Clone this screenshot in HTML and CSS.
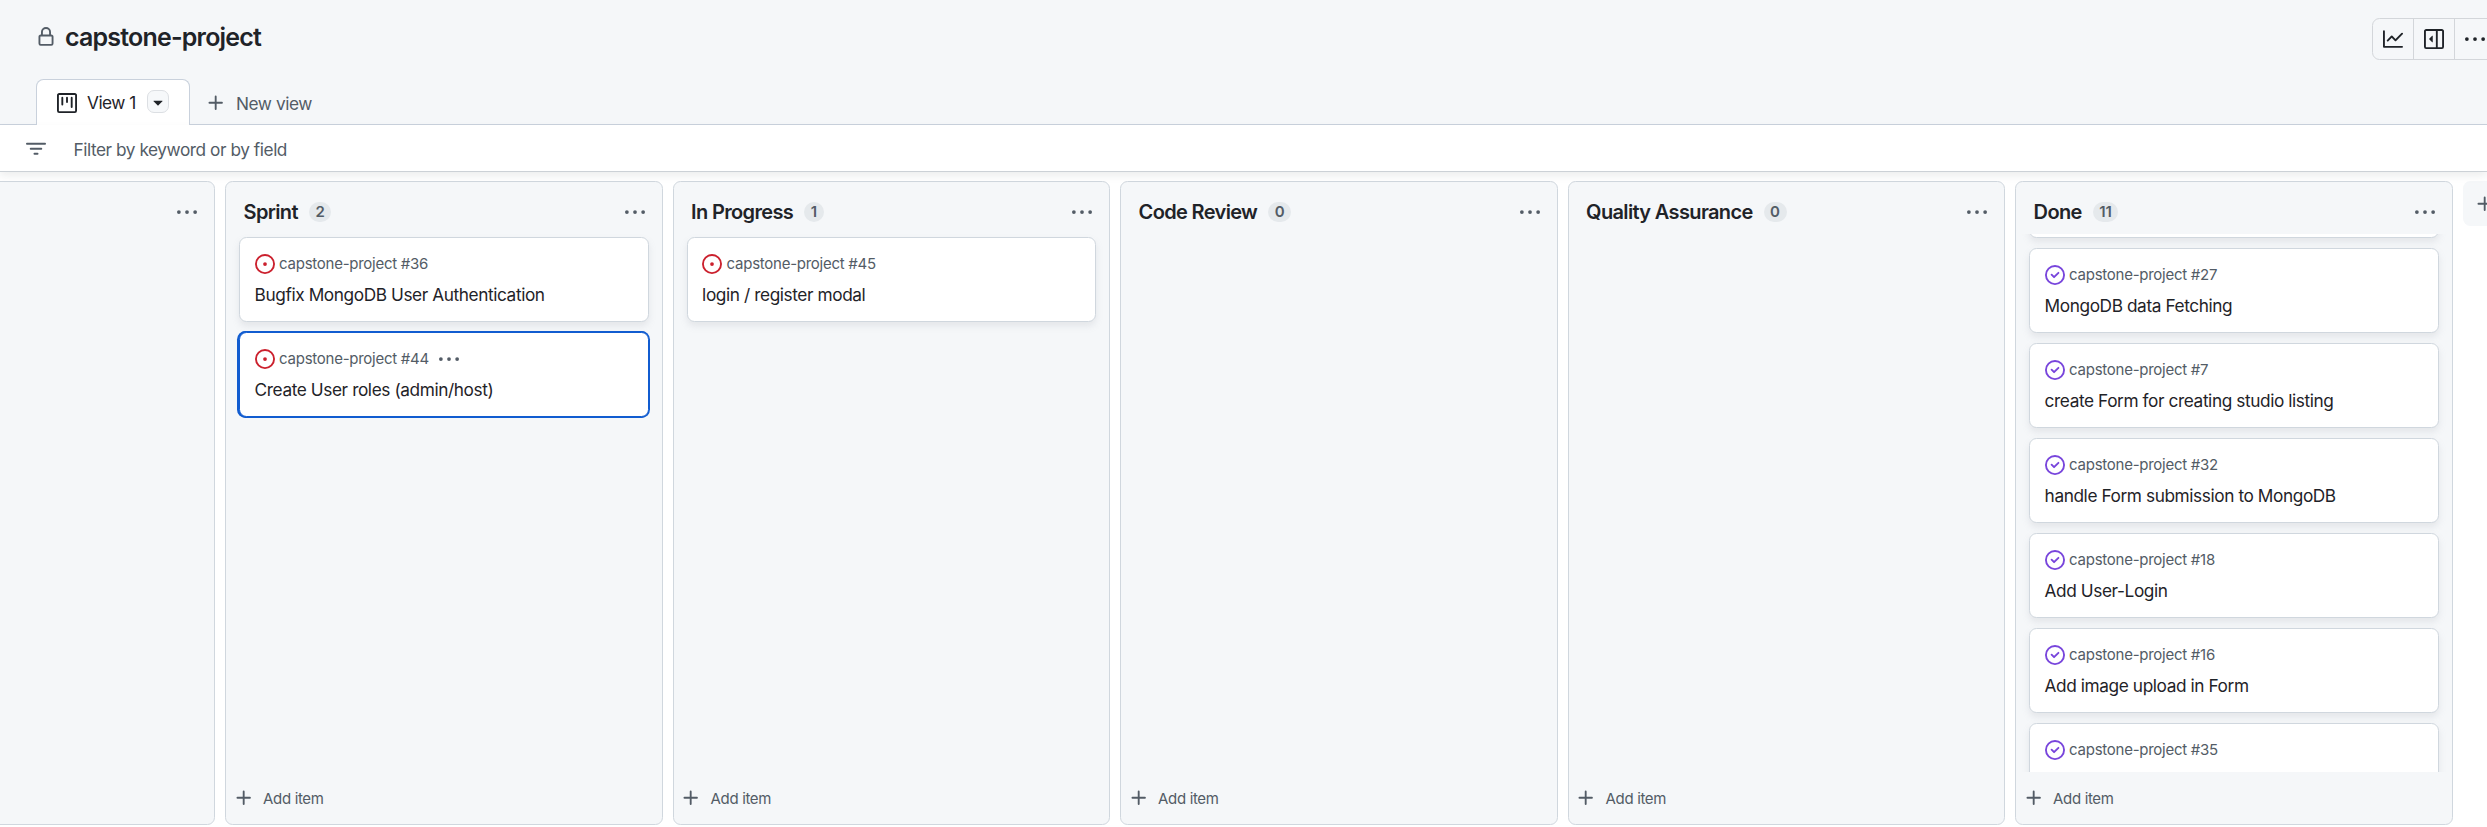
FILE: index.html
```
<!DOCTYPE html>
<html lang="en">
<head>
<meta charset="utf-8">
<title>capstone-project</title>
<link rel="stylesheet" href="styles.css">
</head>
<body>
<svg class="sprite" aria-hidden="true">
  <symbol id="lock" viewBox="0 0 16 16"><path d="M4 4a4 4 0 0 1 8 0v2h.25c.966 0 1.75.784 1.75 1.75v5.5A1.75 1.75 0 0 1 12.25 15h-8.5A1.75 1.75 0 0 1 2 13.25v-5.5C2 6.784 2.784 6 3.75 6H4Zm8.25 3.5h-8.5a.25.25 0 0 0-.25.25v5.5c0 .138.112.25.25.25h8.5a.25.25 0 0 0 .25-.25v-5.5a.25.25 0 0 0-.25-.25ZM10.5 6V4a2.5 2.5 0 1 0-5 0v2Z"/></symbol>
  <symbol id="project" viewBox="0 0 16 16"><path d="M1.75 0h12.5C15.216 0 16 .784 16 1.75v12.5A1.75 1.75 0 0 1 14.25 16H1.75A1.75 1.75 0 0 1 0 14.25V1.75C0 .784.784 0 1.75 0ZM1.5 1.75v12.5c0 .138.112.25.25.25h12.5a.25.25 0 0 0 .25-.25V1.75a.25.25 0 0 0-.25-.25H1.75a.25.25 0 0 0-.25.25ZM11.75 3a.75.75 0 0 1 .75.75v7.5a.75.75 0 0 1-1.5 0v-7.5a.75.75 0 0 1 .75-.75Zm-8.25.75a.75.75 0 0 1 1.5 0v5.5a.75.75 0 0 1-1.5 0ZM8 3a.75.75 0 0 1 .75.75v3.5a.75.75 0 0 1-1.5 0v-3.5A.75.75 0 0 1 8 3Z"/></symbol>
  <symbol id="plus" viewBox="0 0 16 16"><path d="M7.75 2a.75.75 0 0 1 .75.75V7h4.25a.75.75 0 0 1 0 1.5H8.5v4.25a.75.75 0 0 1-1.5 0V8.5H2.75a.75.75 0 0 1 0-1.5H7V2.75A.75.75 0 0 1 7.75 2Z"/></symbol>
  <symbol id="filter" viewBox="0 0 16 16"><path d="M.75 3h14.5a.75.75 0 0 1 0 1.5H.75a.75.75 0 0 1 0-1.5ZM3 7.75A.75.75 0 0 1 3.75 7h8.5a.75.75 0 0 1 0 1.5h-8.5A.75.75 0 0 1 3 7.75Zm3 4a.75.75 0 0 1 .75-.75h2.5a.75.75 0 0 1 0 1.5h-2.5a.75.75 0 0 1-.75-.75Z"/></symbol>
  <symbol id="triangle" viewBox="0 0 16 16"><path d="m4.427 7.427 3.396 3.396a.25.25 0 0 0 .354 0l3.396-3.396A.25.25 0 0 0 11.396 7H4.604a.25.25 0 0 0-.177.427Z"/></symbol>
  <symbol id="graph" viewBox="0 0 16 16"><path d="M1.5 1.75V13.5h13.75a.75.75 0 0 1 0 1.5H.75a.75.75 0 0 1-.75-.75V1.75a.75.75 0 0 1 1.5 0Zm14.28 2.53-5.25 5.25a.75.75 0 0 1-1.06 0L7 7.06 4.28 9.78a.751.751 0 0 1-1.042-.018.751.751 0 0 1-.018-1.042l3.25-3.25a.75.75 0 0 1 1.06 0L10 7.94l4.72-4.72a.751.751 0 0 1 1.042.018.751.751 0 0 1 .018 1.042Z"/></symbol>
  <symbol id="sidebar" viewBox="0 0 16 16"><path d="m4.177 7.823 2.396-2.396A.25.25 0 0 1 7 5.604v4.792a.25.25 0 0 1-.427.177L4.177 8.177a.25.25 0 0 1 0-.354Z"/><path d="M0 1.75C0 .784.784 0 1.75 0h12.5C15.216 0 16 .784 16 1.75v12.5A1.75 1.75 0 0 1 14.25 16H1.75A1.75 1.75 0 0 1 0 14.25Zm1.75-.25a.25.25 0 0 0-.25.25v12.5c0 .138.112.25.25.25H9.5v-13Zm12.5 13a.25.25 0 0 0 .25-.25V1.75a.25.25 0 0 0-.25-.25H11v13Z"/></symbol>
  <symbol id="dots" viewBox="0 0 16 16"><circle cx="1.5" cy="8" r="1.5"/><circle cx="8" cy="8" r="1.5"/><circle cx="14.5" cy="8" r="1.5"/></symbol>
  <symbol id="open" viewBox="0 0 16 16"><path d="M8 9.5a1.5 1.5 0 1 0 0-3 1.5 1.5 0 0 0 0 3Z"/><path d="M8 0a8 8 0 1 1 0 16A8 8 0 0 1 8 0ZM1.5 8a6.5 6.5 0 1 0 13 0 6.5 6.5 0 0 0-13 0Z"/></symbol>
  <symbol id="closed" viewBox="0 0 16 16"><path d="M11.28 6.78a.75.75 0 0 0-1.06-1.06L7.25 8.69 5.78 7.22a.75.75 0 0 0-1.06 1.06l2 2a.75.75 0 0 0 1.06 0l3.5-3.5Z"/><path d="M16 8A8 8 0 1 1 0 8a8 8 0 0 1 16 0Zm-1.5 0a6.5 6.5 0 1 0-13 0 6.5 6.5 0 0 0 13 0Z"/></symbol>
</svg>

<header class="header">
  <svg class="icon muted"><use href="#lock"/></svg>
  <h1 class="title">capstone-project</h1>
  <div class="button-group">
    <button class="group-button"><svg class="icon"><use href="#graph"/></svg></button>
    <button class="group-button"><svg class="icon"><use href="#sidebar"/></svg></button>
    <button class="group-button"><svg class="icon"><use href="#dots"/></svg></button>
  </div>
</header>

<nav class="tabs">
  <div class="tab">
    <svg class="icon"><use href="#project"/></svg>
    <span class="tab-label">View 1</span>
    <button class="tab-menu"><svg class="icon"><use href="#triangle"/></svg></button>
  </div>
  <div class="new-view">
    <svg class="icon"><use href="#plus"/></svg>
    <span class="new-view-label">New view</span>
  </div>
</nav>

<div class="filter-bar">
  <svg class="icon"><use href="#filter"/></svg>
  <span class="filter-text">Filter by keyword or by field</span>
</div>

<main class="board">
  <section class="column">
    <div class="column-header"><svg class="icon column-menu"><use href="#dots"/></svg></div>
    <div class="cards"></div>
    <div class="add-item"><svg class="icon"><use href="#plus"/></svg></div>
  </section>

  <section class="column">
    <div class="column-header"><h2 class="column-name">Sprint</h2><span class="count">2</span><svg class="icon column-menu"><use href="#dots"/></svg></div>
    <div class="cards">
      <article class="card">
        <div class="card-ref"><svg class="icon open"><use href="#open"/></svg><span class="ref-text">capstone-project #36</span></div>
        <div class="card-title">Bugfix MongoDB User Authentication</div>
      </article>
      <article class="card selected">
        <div class="card-ref"><svg class="icon open"><use href="#open"/></svg><span class="ref-text">capstone-project #44</span><svg class="icon card-menu"><use href="#dots"/></svg></div>
        <div class="card-title">Create User roles (admin/host)</div>
      </article>
    </div>
    <div class="add-item"><svg class="icon"><use href="#plus"/></svg><span class="add-label">Add item</span></div>
  </section>

  <section class="column">
    <div class="column-header"><h2 class="column-name">In Progress</h2><span class="count">1</span><svg class="icon column-menu"><use href="#dots"/></svg></div>
    <div class="cards">
      <article class="card">
        <div class="card-ref"><svg class="icon open"><use href="#open"/></svg><span class="ref-text">capstone-project #45</span></div>
        <div class="card-title">login / register modal</div>
      </article>
    </div>
    <div class="add-item"><svg class="icon"><use href="#plus"/></svg><span class="add-label">Add item</span></div>
  </section>

  <section class="column">
    <div class="column-header"><h2 class="column-name">Code Review</h2><span class="count">0</span><svg class="icon column-menu"><use href="#dots"/></svg></div>
    <div class="cards"></div>
    <div class="add-item"><svg class="icon"><use href="#plus"/></svg><span class="add-label">Add item</span></div>
  </section>

  <section class="column">
    <div class="column-header"><h2 class="column-name">Quality Assurance</h2><span class="count">0</span><svg class="icon column-menu"><use href="#dots"/></svg></div>
    <div class="cards"></div>
    <div class="add-item"><svg class="icon"><use href="#plus"/></svg><span class="add-label">Add item</span></div>
  </section>

  <section class="column">
    <div class="column-header"><h2 class="column-name">Done</h2><span class="count">11</span><svg class="icon column-menu"><use href="#dots"/></svg></div>
    <div class="cards scrolled">
      <article class="card"></article>
      <article class="card">
        <div class="card-ref"><svg class="icon closed"><use href="#closed"/></svg><span class="ref-text">capstone-project #27</span></div>
        <div class="card-title">MongoDB data Fetching</div>
      </article>
      <article class="card">
        <div class="card-ref"><svg class="icon closed"><use href="#closed"/></svg><span class="ref-text">capstone-project #7</span></div>
        <div class="card-title">create Form for creating studio listing</div>
      </article>
      <article class="card">
        <div class="card-ref"><svg class="icon closed"><use href="#closed"/></svg><span class="ref-text">capstone-project #32</span></div>
        <div class="card-title">handle Form submission to MongoDB</div>
      </article>
      <article class="card">
        <div class="card-ref"><svg class="icon closed"><use href="#closed"/></svg><span class="ref-text">capstone-project #18</span></div>
        <div class="card-title">Add User-Login</div>
      </article>
      <article class="card">
        <div class="card-ref"><svg class="icon closed"><use href="#closed"/></svg><span class="ref-text">capstone-project #16</span></div>
        <div class="card-title">Add image upload in Form</div>
      </article>
      <article class="card">
        <div class="card-ref"><svg class="icon closed"><use href="#closed"/></svg><span class="ref-text">capstone-project #35</span></div>
      </article>
    </div>
    <div class="add-item"><svg class="icon"><use href="#plus"/></svg><span class="add-label">Add item</span></div>
  </section>

  <button class="add-column"><svg class="icon"><use href="#plus"/></svg></button>
</main>
</body>
</html>
```
FILE: styles.css
```
* { box-sizing: border-box; }

html, body { height: 100%; }

body {
  margin: 0;
  overflow: hidden;
  display: flex;
  flex-direction: column;
  background: #fff;
  color: #1f2328;
  font-family: Inter, "Liberation Sans", sans-serif;
  font-size: 17.25px;
}

h1, h2 { margin: 0; }
button { margin: 0; padding: 0; color: inherit; font: inherit; }

.sprite { display: none; }
.icon { display: block; flex: none; width: 20px; height: 20px; fill: currentColor; }
.muted { color: #535c66; }
.open { color: #cb202d; }
.closed { color: #7845dc; }

.header {
  flex: none;
  display: flex;
  align-items: center;
  height: 79px;
  padding: 0 0 6px 36px;
  background: #f5f7f9;
}
.title {
  margin-left: 9px;
  font-size: 25px;
  font-weight: 600;
  line-height: 38px;
  letter-spacing: -0.8px;
}
.button-group {
  flex: none;
  display: flex;
  width: 124px;
  height: 42px;
  margin: 4px -9px 0 auto;
  border: 1px solid #d3d6da;
  border-radius: 7.5px;
}
.group-button {
  flex: 1;
  display: flex;
  align-items: center;
  justify-content: center;
  background: none;
  border: 0;
  border-left: 1px solid #d3d6da;
}
.group-button:first-child { border-left: 0; }

.tabs {
  flex: none;
  display: flex;
  height: 46px;
  padding-left: 36px;
  background: #f5f7f9;
  box-shadow: inset 0 -1px #c9d1dc;
}
.tab {
  display: flex;
  align-items: center;
  width: 154px;
  padding-left: 20px;
  background: #fff;
  border: 1px solid #c9d1dc;
  border-bottom: 0;
  border-radius: 7.5px 7.5px 0 0;
}
.tab-label { width: 60px; padding-left: 10px; white-space: nowrap; letter-spacing: -0.5px; }
.tab-menu {
  display: flex;
  align-items: center;
  justify-content: center;
  width: 22px;
  height: 23px;
  margin: -2px 0 0 10px;
  background: #f6f8fa;
  border: 1px solid #dcdfe3;
  border-radius: 7px;
}
.new-view { display: flex; align-items: center; padding: 2px 0 0 16px; color: #535c66; }
.new-view-label { margin-left: 10px; letter-spacing: -0.45px; }

.filter-bar {
  flex: none;
  position: relative;
  display: flex;
  align-items: center;
  height: 47px;
  padding: 2px 0 0 26px;
  background: #fff;
  border-bottom: 1px solid #ccd1d6;
  box-shadow: 0 4px 8px rgba(31, 35, 40, 0.08);
  color: #535c66;
}
.filter-text { margin-left: 27.5px; letter-spacing: -0.45px; }

.board {
  flex: 1;
  display: flex;
  gap: 10px;
  min-height: 0;
  margin-left: -222.4px;
  padding: 9px 0 2px;
}
.column {
  flex: none;
  display: flex;
  flex-direction: column;
  width: 437.5px;
  background: #f5f7f9;
  border: 1px solid #d0d7de;
  border-radius: 7.5px;
}
.column-header {
  flex: none;
  display: flex;
  align-items: center;
  height: 52px;
  padding: 8px 17px 0 17.5px;
}
.column-name { font-size: 20px; font-weight: 600; letter-spacing: -0.65px; white-space: nowrap; }
.count {
  height: 20px;
  margin-left: 11px;
  padding: 0 6.5px;
  border-radius: 10px;
  background: #e5e9ec;
  color: #535c66;
  font-size: 15px;
  font-weight: 600;
  line-height: 20px;
}
.column-menu { margin-left: auto; color: #535c66; }

.cards {
  flex: 1;
  min-height: 0;
  overflow: hidden;
  display: flex;
  flex-direction: column;
  gap: 10px;
  padding: 3px 13px 0;
}
.scrolled { padding-top: 0; justify-content: flex-start; }
.scrolled .card:first-child { margin-top: -81px; }
.card {
  flex: none;
  height: 85px;
  padding: 16px 15px 0 14.5px;
  background: #fff;
  border: 1px solid #d0d7de;
  border-radius: 7.5px;
  box-shadow: 0 4px 7px rgba(140, 149, 159, 0.17);
}
.selected { border-color: #115cd0; box-shadow: 0 0 0 1px #115cd0, -1px 0 0 1px #115cd0; }
.card-ref { display: flex; align-items: center; height: 20px; margin-top: -0.5px; color: #535c66; font-size: 15px; }
.ref-text { margin-left: 4.5px; letter-spacing: -0.26px; white-space: nowrap; }
.card-menu { margin-left: 10.5px; }
.card-title { margin-top: 8.5px; line-height: 26px; letter-spacing: -0.41px; white-space: nowrap; }

.add-item {
  flex: none;
  display: flex;
  align-items: center;
  height: 52px;
  padding-left: 7.5px;
  color: #535c66;
  font-size: 15px;
}
.add-label { margin-left: 9.5px; letter-spacing: -0.35px; }

.add-column {
  flex: none;
  display: flex;
  align-items: center;
  justify-content: center;
  width: 45px;
  height: 45px;
  background: #f5f7f9;
  border: 0;
  border-radius: 7.5px;
  color: #535c66;
}
```
